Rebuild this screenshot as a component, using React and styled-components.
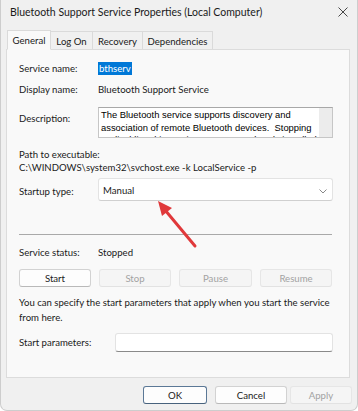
import React from 'react';
import styled, { createGlobalStyle } from 'styled-components';

const Global = createGlobalStyle`
  html, body { margin: 0; padding: 0; background: #ffffff; }
  body { font-family: Lato, "Noto Sans", sans-serif; }
  * { box-sizing: border-box; }
`;

const Window = styled.div`
  position: relative;
  width: 358px;
  height: 411px;
  background: #f0f0f0;
  border: 1px solid #cdcdcd;
  border-top: none;
  border-radius: 0 0 7px 7px;
  display: flex;
  flex-direction: column;
  overflow: hidden;
  color: #1a1a1a;
  font-size: 9.6px;
`;

const TitleBar = styled.div`
  height: 24px;
  display: flex;
  align-items: center;
  justify-content: space-between;
  padding: 0 8px 0 9px;
  font-size: 10.5px;
  color: #1a1a1a;
`;

const CloseBtn = styled.div`
  width: 12px;
  height: 12px;
  display: flex;
  align-items: center;
  justify-content: center;
`;

const Tabs = styled.div`
  display: flex;
  align-items: flex-end;
  height: 20px;
  margin: 5px 0 0 6px;
  position: relative;
  z-index: 1;
`;

const Tab = styled.div`
  width: ${p => p.$w}px;
  height: ${p => (p.$active ? '20px' : '18px')};
  display: flex;
  align-items: center;
  justify-content: center;
  background: ${p => (p.$active ? '#f9f9f9' : '#f0f0f0')};
  border: 1px solid #dadada;
  border-bottom: ${p => (p.$active ? '1px solid #f9f9f9' : 'none')};
  margin-left: ${p => (p.$active ? '0' : '-1px')};
  margin-bottom: ${p => (p.$active ? '-1px' : '0')};
  padding-top: ${p => (p.$active ? '0' : '1px')};
  color: #1a1a1a;
`;

const Panel = styled.div`
  margin: 0 7px 0 5px;
  height: 329px;
  background: #f9f9f9;
  border: 1px solid #dcdcdc;
  padding: 0 16px 0 12px;
  display: flex;
  flex-direction: column;
`;

const Row = styled.div`
  display: grid;
  grid-template-columns: ${p => p.$label || '79px'} 1fr;
  align-items: ${p => p.$align || 'center'};
  margin-top: ${p => p.$mt || 0}px;
  min-height: ${p => p.$h || 14}px;
  line-height: 14px;
`;

const Label = styled.div`
  padding-top: ${p => p.$pt || 0}px;
  white-space: nowrap;
`;

const Selected = styled.span`
  background: #0078d7;
  color: #ffffff;
  padding: 1px 1px;
`;

const DescBox = styled.div`
  height: 31px;
  background: #ffffff;
  border: 1px solid #c6c6c6;
  border-top-color: #a8a8a8;
  display: flex;
  overflow: hidden;
`;

const DescText = styled.div`
  flex: 1;
  padding: 1px 2px 0;
  font-family: "Liberation Sans", Arial, sans-serif;
  font-size: 9.4px;
  line-height: 12.5px;
  color: #000;
  overflow: hidden;
`;

const ScrollTrack = styled.div`
  width: 13px;
  background: #ececec;
`;

const PathBlock = styled.div`
  margin-top: 10px;
  line-height: 13px;
`;

const Select = styled.div`
  height: 23px;
  background: #ffffff;
  border: 1px solid #e3e3e3;
  border-bottom-color: #d0d0d0;
  border-radius: 3px;
  display: flex;
  align-items: center;
  justify-content: space-between;
  padding: 3px 5px 0 4px;
`;

const Divider = styled.div`
  height: 1px;
  background: #a9a9a9;
  margin-top: 33px;
  margin-right: 1px;
`;

const ButtonRow = styled.div`
  display: grid;
  grid-template-columns: 72px 72px 73px 72px;
  column-gap: 8px;
  margin-top: 9px;
`;

const Btn = styled.div`
  height: 18px;
  display: flex;
  align-items: center;
  justify-content: center;
  border-radius: 3px;
  background: ${p => (p.$disabled ? '#f5f5f5' : '#fdfdfd')};
  border: 1px solid ${p => (p.$primary ? '#5b7896' : p.$disabled ? '#e6e6e6' : '#d2d2d2')};
  border-bottom-color: ${p => (p.$primary ? '#48627d' : p.$disabled ? '#e2e2e2' : '#b9b9b9')};
  color: ${p => (p.$disabled ? '#a2a2a2' : '#1a1a1a')};
`;

const Info = styled.div`
  margin-top: 8px;
  line-height: 15px;
`;

const Input = styled.div`
  height: 19px;
  background: #ffffff;
  border: 1px solid #e3e3e3;
  border-bottom-color: #8a8a8a;
  border-radius: 3px;
`;

const Footer = styled.div`
  display: flex;
  justify-content: flex-end;
  align-items: center;
  padding: 8px 5px 0 0;
`;

const FooterBtn = styled(Btn)`
  width: ${p => p.$w}px;
  margin-left: ${p => p.$ml}px;
`;

const ArrowSvg = styled.svg`
  position: absolute;
  left: 0;
  top: 0;
  pointer-events: none;
`;

export default function App() {
  return (
    <>
      <Global />
      <Window>
        <TitleBar>
          <span>Bluetooth Support Service Properties (Local Computer)</span>
          <CloseBtn>
            <svg width="10" height="10" viewBox="0 0 10 10">
              <path d="M0.5 0.5 L9.5 9.5 M9.5 0.5 L0.5 9.5" stroke="#333" strokeWidth="0.9" />
            </svg>
          </CloseBtn>
        </TitleBar>
        <Tabs>
          <Tab $active $w={44}>General</Tab>
          <Tab $w={43}>Log On</Tab>
          <Tab $w={51}>Recovery</Tab>
          <Tab $w={71}>Dependencies</Tab>
        </Tabs>
        <Panel>
          <Row $mt={12}>
            <Label>Service name:</Label>
            <div><Selected>bthserv</Selected></div>
          </Row>
          <Row $mt={7}>
            <Label>Display name:</Label>
            <div>Bluetooth Support Service</div>
          </Row>
          <Row $mt={10} $align="start" $h={31}>
            <Label $pt={5}>Description:</Label>
            <DescBox>
              <DescText>
                The Bluetooth service supports discovery and association of remote Bluetooth devices.&nbsp; Stopping or disabling this service may cause already installed Bluetooth devices to fail to operate properly.
              </DescText>
              <ScrollTrack />
            </DescBox>
          </Row>
          <PathBlock>
            <div>Path to executable:</div>
            <div>C:\WINDOWS\system32\svchost.exe -k LocalService -p</div>
          </PathBlock>
          <Row $mt={4} $h={23} $align="start">
            <Label $pt={7}>Startup type:</Label>
            <Select>
              <span>Manual</span>
              <svg width="8" height="5" viewBox="0 0 8 5">
                <path d="M0.5 0.5 L4 4 L7.5 0.5" stroke="#7a7a7a" strokeWidth="0.9" fill="none" />
              </svg>
            </Select>
          </Row>
          <Divider />
          <Row $mt={11}>
            <Label>Service status:</Label>
            <div>Stopped</div>
          </Row>
          <ButtonRow>
            <Btn>Start</Btn>
            <Btn $disabled>Stop</Btn>
            <Btn $disabled>Pause</Btn>
            <Btn $disabled>Resume</Btn>
          </ButtonRow>
          <Info>
            You can specify the start parameters that apply when you start the service from here.
          </Info>
          <Row $mt={8} $label="96px" $h={19}>
            <Label>Start parameters:</Label>
            <Input />
          </Row>
        </Panel>
        <Footer>
          <FooterBtn $primary $w={64} $ml={0}>OK</FooterBtn>
          <FooterBtn $w={72} $ml={8}>Cancel</FooterBtn>
          <FooterBtn $disabled $w={62} $ml={3}>Apply</FooterBtn>
        </Footer>
        <ArrowSvg width="358" height="411" viewBox="0 0 358 411">
          <line x1="194" y1="246" x2="164" y2="210" stroke="#e0393b" strokeWidth="3" strokeLinecap="round" />
          <polygon points="157,201 161,216 171,208" fill="#e0393b" />
        </ArrowSvg>
      </Window>
    </>
  );
}
